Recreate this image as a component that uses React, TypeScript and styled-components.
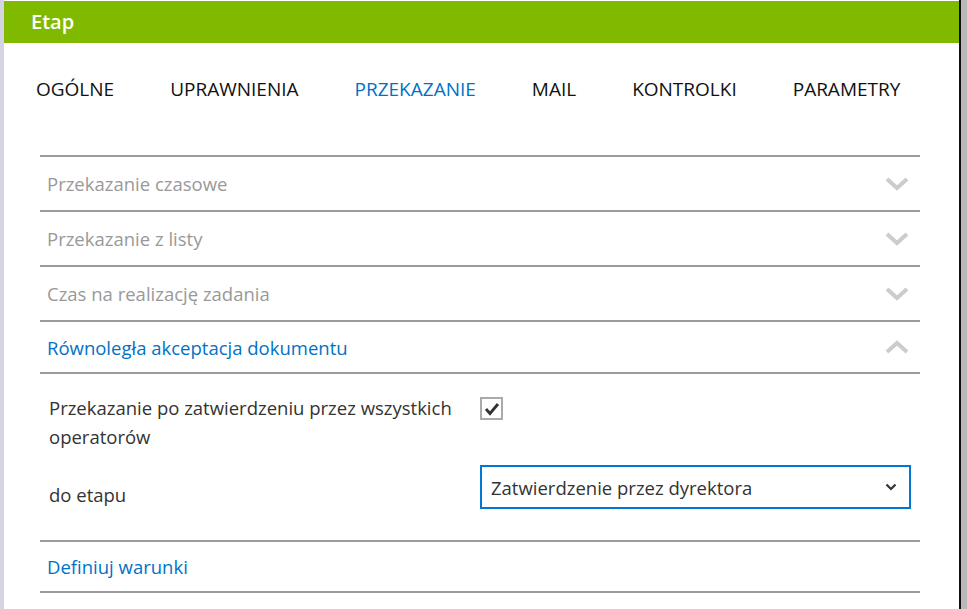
import styled, { createGlobalStyle } from "styled-components";

const GlobalStyle = createGlobalStyle`
  html, body {
    margin: 0;
    padding: 0;
    background: #fff;
  }
  body {
    font-family: "Open Sans", "Noto Sans", sans-serif;
    color: #333;
  }
`;

const tabs = ["OGÓLNE", "UPRAWNIENIA", "PRZEKAZANIE", "MAIL", "KONTROLKI", "PARAMETRY"];

interface Section {
  title: string;
  open?: boolean;
  active?: boolean;
  height: number;
}

const sections: Section[] = [
  { title: "Przekazanie czasowe", height: 55 },
  { title: "Przekazanie z listy", height: 55 },
  { title: "Czas na realizację zadania", height: 55 },
  { title: "Równoległa akceptacja dokumentu", open: true, active: true, height: 52 },
];

function Chevron({ up }: { up?: boolean }) {
  return (
    <svg width="24" height="14" viewBox="0 0 24 14">
      <polyline
        points={up ? "2,12 12,3 22,12" : "2,2 12,11 22,2"}
        fill="none"
        stroke="#cccccc"
        strokeWidth="4"
      />
    </svg>
  );
}

function App() {
  return (
    <>
      <GlobalStyle />
      <Page>
        <LeftStrip />
        <Window>
          <Header>Etap</Header>
          <Tabs>
            {tabs.map((t) => (
              <Tab key={t} $active={t === "PRZEKAZANIE"}>
                {t}
              </Tab>
            ))}
          </Tabs>
          <Accordion>
            {sections.map((s) => (
              <div key={s.title}>
                <SectionHead $h={s.height} $active={s.active}>
                  <span>{s.title}</span>
                  <Chevron up={s.open} />
                </SectionHead>
                {s.open && (
                  <SectionBody>
                    <Label>Przekazanie po zatwierdzeniu przez wszystkich operatorów</Label>
                    <CheckBox>
                      <svg width="18" height="16" viewBox="0 0 18 16">
                        <polyline
                          points="3,8 7,12.5 15,3"
                          fill="none"
                          stroke="#333"
                          strokeWidth="2.8"
                        />
                      </svg>
                    </CheckBox>
                    <StageLabel>do etapu</StageLabel>
                    <Select>
                      <span>Zatwierdzenie przez dyrektora</span>
                      <svg width="12" height="8" viewBox="0 0 12 8">
                        <polyline
                          points="1.5,1.5 6,6 10.5,1.5"
                          fill="none"
                          stroke="#333"
                          strokeWidth="2.2"
                        />
                      </svg>
                    </Select>
                  </SectionBody>
                )}
              </div>
            ))}
            <SectionHead $h={51} $active>
              <span>Definiuj warunki</span>
            </SectionHead>
            <BottomLine />
          </Accordion>
        </Window>
        <RightEdge />
      </Page>
    </>
  );
}

export default App;

const Page = styled.div`
  display: flex;
  width: 967px;
  height: 609px;
  overflow: hidden;
`;
const LeftStrip = styled.div`
  width: 4px;
  background: #d4d4e2;
`;
const Window = styled.div`
  width: 955px;
  display: flex;
  flex-direction: column;
`;
const RightEdge = styled.div`
  width: 8px;
  border-left: 2px solid #111;
  background: #b9b9b9;
  box-sizing: border-box;
`;
const Header = styled.div`
  margin-top: 1px;
  height: 42px;
  background: #7fba00;
  color: #fff;
  font-size: 20px;
  font-weight: 600;
  line-height: 42px;
  padding-left: 27px;
`;
const Tabs = styled.div`
  display: flex;
  gap: 56px;
  padding: 32px 0 0 32px;
  height: 80px;
  box-sizing: border-box;
`;
const Tab = styled.div<{ $active?: boolean }>`
  font-size: 19px;
  line-height: 28px;
  color: ${(p) => (p.$active ? "#0072c6" : "#111")};
`;
const Accordion = styled.div`
  margin: 32px 0 0 36px;
  width: 880px;
`;
const SectionHead = styled.div<{ $h: number; $active?: boolean }>`
  display: flex;
  align-items: center;
  justify-content: space-between;
  height: ${(p) => p.$h}px;
  box-sizing: border-box;
  border-top: 2px solid #9b9b9b;
  padding: 0 11px 0 7px;
  font-size: 18.5px;
  color: ${(p) => (p.$active ? "#0072c6" : "#999")};
`;
const SectionBody = styled.div`
  border-top: 2px solid #9b9b9b;
  display: grid;
  grid-template-columns: 431px 431px;
  row-gap: 14px;
  padding: 19px 0 32px 9px;
  height: 168px;
  box-sizing: border-box;
`;
const Label = styled.div`
  font-size: 18.5px;
  line-height: 29px;
  color: #333;
  padding-right: 10px;
`;
const StageLabel = styled(Label)`
  align-self: end;
`;
const CheckBox = styled.div`
  margin-top: 4px;
  width: 23px;
  height: 23px;
  box-sizing: border-box;
  border: 2px solid #aaa;
  display: flex;
  align-items: center;
  justify-content: center;
`;
const Select = styled.div`
  height: 44px;
  box-sizing: border-box;
  border: 2px solid #0078d4;
  display: flex;
  align-items: center;
  justify-content: space-between;
  padding: 0 12px 0 9px;
  font-size: 18.5px;
  color: #333;
`;
const BottomLine = styled.div`
  border-top: 2px solid #9b9b9b;
`;
